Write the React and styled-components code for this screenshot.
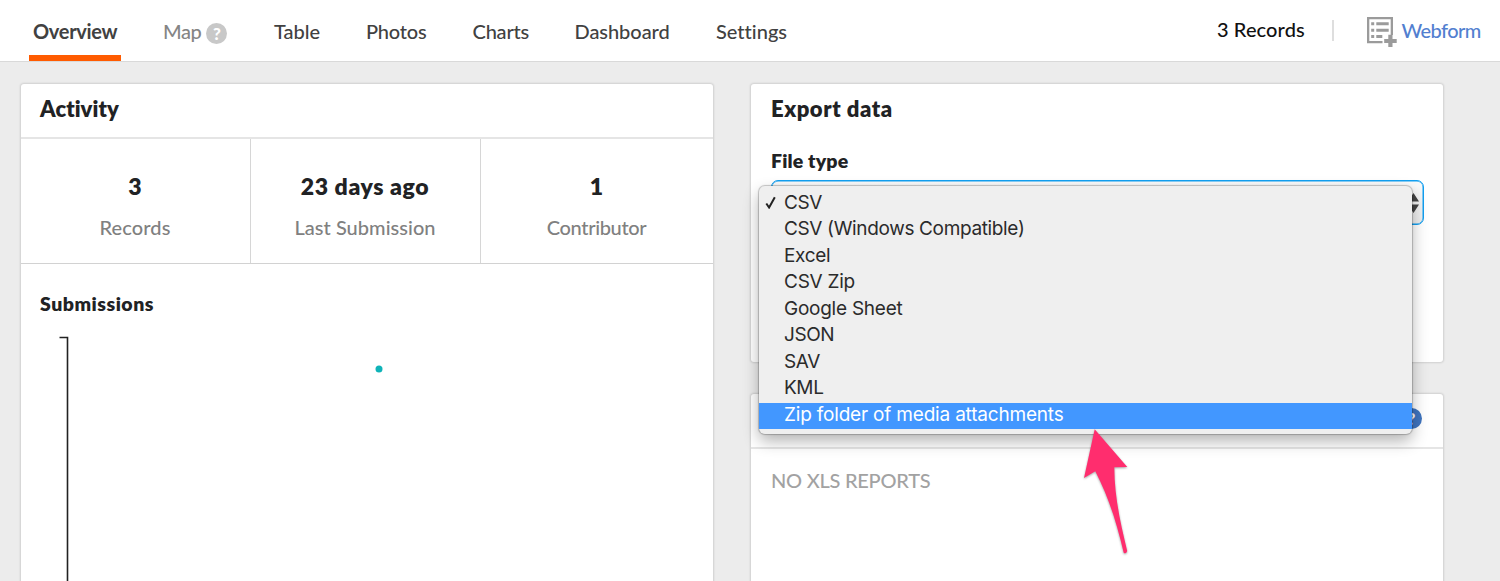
import React from "react";
import styled, { createGlobalStyle, css } from "styled-components";

const Global = createGlobalStyle`
  *, *::before, *::after { box-sizing: border-box; }
  html, body, #root { height: 100%; }
  body { margin: 0; overflow: hidden; background: #ececec; font-family: Lato, "Open Sans", sans-serif; font-weight: 500; font-variant-ligatures: none; color: #212224; }
  h2, h3, p, ul { margin: 0; padding: 0; font-weight: inherit; }
`;
const Page = styled.div`
  position: relative; height: 581px; overflow: hidden; display: flex; flex-direction: column;
`;
const TopBar = styled.header`
  display: flex; justify-content: space-between; height: 62px; flex: none;
  padding: 0 20px 0 29px; background: #fff; border-bottom: 1px solid #d9d9d9;
`;
const Tabs = styled.nav`display: flex; gap: 38px;`;
const Tab = styled.a`
  display: flex; width: ${(p) => p.$w}px; height: 61px; padding: 0 0 0 4px; white-space: nowrap;
  font-size: 20px; line-height: 62px; letter-spacing: ${(p) => p.$ls || 0}px;
  color: ${(p) => (p.$muted ? "#858585" : "#414141")};
  ${(p) => p.$active && css`font-weight: 700; border-bottom: 6px solid #ff5b00;`}
`;
const Help = styled.span`
  display: flex; align-items: center; justify-content: center; width: 21px; height: 21px; border-radius: 50%;
  background: ${(p) => p.$bg}; color: #fff; font: 900 17px/21px Lato, sans-serif; letter-spacing: 0;
`;
const TabHelp = styled(Help)`margin: 22.5px 0 0 5px;`;
const Tools = styled.div`display: flex; height: 61px; white-space: nowrap;`;
const Count = styled.span`
  width: 115px; font-size: 20px; line-height: 58px; color: #111; letter-spacing: 0.1px;
`;
const Rule = styled.i`width: 1.5px; height: 21px; margin: 20px 33px 0 0; background: #dedede;`;
const Webform = styled.a`
  display: flex; width: 113.5px; color: #527fd0; font-size: 20px; line-height: 60px; letter-spacing: -0.6px;
  svg { flex: none; margin: 17px 5px 0 0; }
`;
const Columns = styled.main`display: flex; gap: 38.5px; flex: 1; padding: 22px 0 0 20.5px;`;
const Column = styled.div`width: 692px; display: flex; flex-direction: column; gap: 32px;`;
const Card = styled.section`
  height: ${(p) => p.$h}px; flex: none; background: #fff; border-radius: 3px;
  box-shadow: 0 0 2px 1px rgba(0, 0, 0, 0.12);
`;
const CardHead = styled.div`
  display: flex; height: 55px; border-bottom: 2px solid #e5e5e5;
  justify-content: ${(p) => (p.$end ? "flex-end" : "flex-start")};
  padding: ${(p) => (p.$end ? "14px 21px" : "0 19.5px")};
`;
const Title = styled.h2`
  font-size: 22px; font-weight: 800; line-height: 50px; letter-spacing: ${(p) => p.$ls}px; white-space: nowrap;
`;
const Stats = styled.div`
  display: grid; grid-template-columns: 230px 230px 1fr; height: 125px; border-bottom: 1px solid #d2d2d2;
`;
const Stat = styled.div`
  display: flex; flex-direction: column; align-items: center; padding-top: 32px; border-right: 1px solid #d6d6d6;
  &:last-child { border-right: 0; }
`;
const Value = styled.strong`
  font-size: 23px; font-weight: 800; line-height: 30px; letter-spacing: ${(p) => p.$ls || 0}px;
`;
const Label = styled.span`
  margin-top: 12px; font-size: 20px; line-height: 28px; color: #808080; letter-spacing: ${(p) => p.$ls}px;
`;
const Sub = styled.h3`
  margin-top: ${(p) => p.$top}px; padding-left: ${(p) => p.$pad}px;
  font-size: 19.5px; font-weight: 800; line-height: 26px; letter-spacing: ${(p) => p.$ls}px;
`;
const Plot = styled.svg`display: block; margin-top: 19px;`;
const ExportBody = styled.div`padding: 0 19.5px 0 20px;`;
const Field = styled.div`
  display: flex; align-items: center; justify-content: flex-end; height: 45px; margin-top: 6px; padding-right: 4px;
  border: 1.5px solid #129ff0; border-radius: 7px; background: linear-gradient(#fafafa, #ededed);
  box-shadow: inset 0 0 0 0.5px #129ff0;
`;
const Empty = styled.p`
  padding: 17px 20px; font-size: 20px; line-height: 28px; color: #a2a2a2; letter-spacing: -0.25px;
`;
const Menu = styled.ul`
  position: absolute; left: 758.5px; top: 185.5px; width: 653.5px; height: 248px; padding-top: 5.3px; list-style: none;
  background: #efefef; border-radius: 6px; font-family: Inter, sans-serif; font-weight: 400;
  box-shadow: 0 0 1px 1px rgba(0, 0, 0, 0.22), 0 7px 16px rgba(0, 0, 0, 0.3);
`;
const Item = styled.li`
  display: flex; height: 26.5px; font-size: 19px; line-height: 23px; white-space: nowrap;
  color: ${(p) => (p.$on ? "#fff" : "#2b2b2b")}; background: ${(p) => (p.$on ? "#4297ff" : "transparent")};
  letter-spacing: ${(p) => p.$ls}px;
`;
const Tick = styled.span`display: flex; width: 25.5px; padding: 5px 0 0 6px;`;
const Arrow = styled.svg`
  position: absolute; left: 1080px; top: 425px; filter: drop-shadow(0 1px 1px rgba(0, 0, 0, 0.35));
`;

const tabs = [
  ["Overview", 92, -0.3],
  ["Map", 73, -0.4],
  ["Table", 54, 0],
  ["Photos", 68.5, -0.2],
  ["Charts", 64, -0.2],
  ["Dashboard", 103.5, -0.05],
  ["Settings", 80, 0],
];
const options = [
  ["CSV", -0.4],
  ["CSV (Windows Compatible)", -0.35],
  ["Excel", -0.35],
  ["CSV Zip", -0.25],
  ["Google Sheet", -0.25],
  ["JSON", -0.4],
  ["SAV", -0.4],
  ["KML", -0.4],
  ["Zip folder of media attachments", -0.19],
];

function FormIcon() {
  return (
    <svg width="30" height="30" viewBox="0 0 30 30" fill="#9b9b9b">
      <path d="M0 0H26V18H23.7V2.3H2.3V24H15.5V26.3H0Z" />
      <path d="M4.2 5.3h3v3h-3zM9.3 5.3h12.4v3H9.3zM4.2 11.8h3v3h-3zM9.3 11.8h12.4v3H9.3zM4.2 18h3v3h-3zM9.3 18h6v3h-6z" />
      <path d="M21.3 17.8h4.2v4.1h4.2v4h-4.2V30h-4.2v-4.1h-4.1v-4h4.1z" />
    </svg>
  );
}

function CheckIcon() {
  return (
    <svg width="12" height="13" viewBox="0 0 12 13" fill="none" stroke="#222" strokeWidth="2">
      <path d="M1.3 7.5L4.1 11.5L9.8 1.3" />
    </svg>
  );
}

function Stepper() {
  return (
    <svg width="11" height="20" viewBox="0 0 11 20" fill="#444">
      <path d="M5.5 0L11 8.5H0ZM5.5 20L11 11.5H0Z" />
    </svg>
  );
}

export default function App() {
  return (
    <Page>
      <Global />
      <TopBar>
        <Tabs>
          {tabs.map(([t, w, ls]) => (
            <Tab key={t} $w={w} $ls={ls} $active={t === "Overview"} $muted={t === "Map"}>
              {t}
              {t === "Map" && <TabHelp $bg="#c8c8c8">?</TabHelp>}
            </Tab>
          ))}
        </Tabs>
        <Tools>
          <Count>3 Records</Count>
          <Rule />
          <Webform><FormIcon />Webform</Webform>
        </Tools>
      </TopBar>
      <Columns>
        <Column>
          <Card $h={520}>
            <CardHead><Title $ls={0.05}>Activity</Title></CardHead>
            <Stats>
              <Stat><Value>3</Value><Label $ls={0.1}>Records</Label></Stat>
              <Stat><Value $ls={0.6}>23 days ago</Value><Label $ls={0.03}>Last Submission</Label></Stat>
              <Stat><Value>1</Value><Label $ls={-0.35}>Contributor</Label></Stat>
            </Stats>
            <Sub $top={27} $pad={19.5} $ls={0.5}>Submissions</Sub>
            <Plot width="690" height="263" viewBox="20.5 336 690 263">
              <path d="M59 337.5H67V600" fill="none" stroke="#222" strokeWidth="1.6" />
              <circle cx="378.5" cy="369" r="3.5" fill="#0fb3b8" />
            </Plot>
          </Card>
        </Column>
        <Column>
          <Card $h={278}>
            <ExportBody><Title $ls={0.55}>Export data</Title></ExportBody>
            <Sub $top={14} $pad={20} $ls={0.15}>File type</Sub>
            <ExportBody><Field><Stepper /></Field></ExportBody>
          </Card>
          <Card $h={220}>
            <CardHead $end><Help $bg="#3f74bf">?</Help></CardHead>
            <Empty>NO XLS REPORTS</Empty>
          </Card>
        </Column>
      </Columns>
      <Menu>
        {options.map(([t, ls], i) => (
          <Item key={t} $ls={ls} $on={i === options.length - 1}>
            <Tick>{i === 0 && <CheckIcon />}</Tick>
            {t}
          </Item>
        ))}
      </Menu>
      <Arrow width="52" height="134" viewBox="1080 425 52 134">
        <path
          d="M1094.7 429.3L1127.3 467L1114.3 467.3C1114.5 498 1121 525 1127.2 551Q1126 554.5 1123.7 552.7C1117 524 1109 498 1095.3 471.3L1084 478Z"
          fill="#ff2d6e"
        />
      </Arrow>
    </Page>
  );
}
